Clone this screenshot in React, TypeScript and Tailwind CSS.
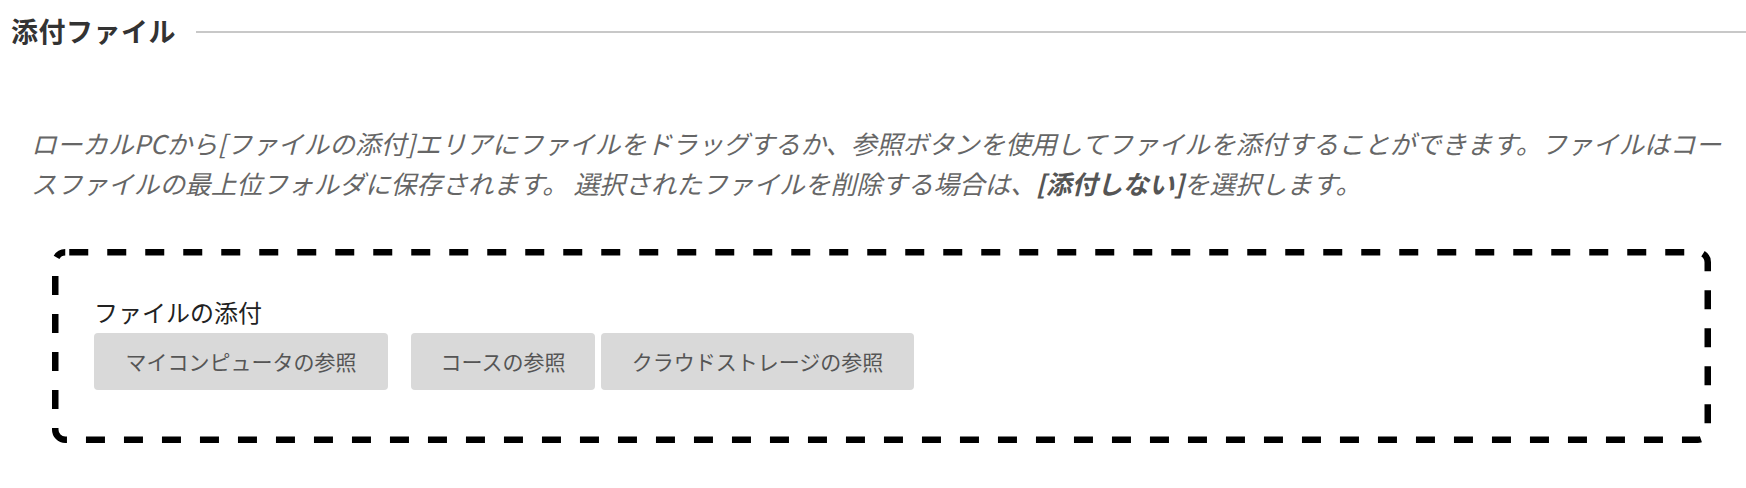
import React from "react";

export default function App() {
  return (
    <div className="w-[1746px] h-[488px] bg-white font-['Noto_Sans_CJK_JP','Noto_Sans',sans-serif] overflow-hidden">
      <div className="flex items-center pl-[11px] pt-[11px] h-[51px]">
        <h2 className="text-[27px] font-bold text-[#333] leading-[40px] tracking-[0.5px]">添付ファイル</h2>
        <div className="flex-1 h-[2px] bg-[#c8c8c8] ml-[20px] mt-[2px]" />
      </div>
      <p className="mt-[72px] ml-[31px] text-[25.7px] italic text-[#666] leading-[40px] whitespace-nowrap">
        ローカルPCから[ファイルの添付]エリアにファイルをドラッグするか、参照ボタンを使用してファイルを添付することができます。ファイルはコー
        <br />
        スファイルの最上位フォルダに保存されます。 選択されたファイルを削除する場合は、
        <span className="font-bold text-[#555]">[添付しない]</span>
        を選択します。
      </p>
      <div className="relative mt-[46px] ml-[52px] mr-[35px] h-[194px] pl-[42px] pt-[46px]">
        <svg
          className="absolute left-0 top-0 pointer-events-none"
          width="1659"
          height="194"
          viewBox="0 0 1659 194"
        >
          <rect
            x="3.25"
            y="3.25"
            width="1652.5"
            height="187.5"
            rx="10"
            ry="10"
            fill="none"
            stroke="#000"
            strokeWidth="6.5"
            strokeDasharray="19 19"
            strokeDashoffset="-4"
          />
        </svg>
        <div className="relative text-[24px] leading-[34px] text-[#222]">ファイルの添付</div>
        <div className="relative flex mt-[4px]">
          <button className="w-[294px] h-[57px] bg-[#d9d9d9] rounded-[4px] text-[21px] text-[#555]">マイコンピュータの参照</button>
          <button className="ml-[23px] w-[184px] h-[57px] bg-[#d9d9d9] rounded-[4px] text-[21px] text-[#555]">コースの参照</button>
          <button className="ml-[6px] w-[313px] h-[57px] bg-[#d9d9d9] rounded-[4px] text-[21px] text-[#555]">クラウドストレージの参照</button>
        </div>
      </div>
    </div>
  );
}
